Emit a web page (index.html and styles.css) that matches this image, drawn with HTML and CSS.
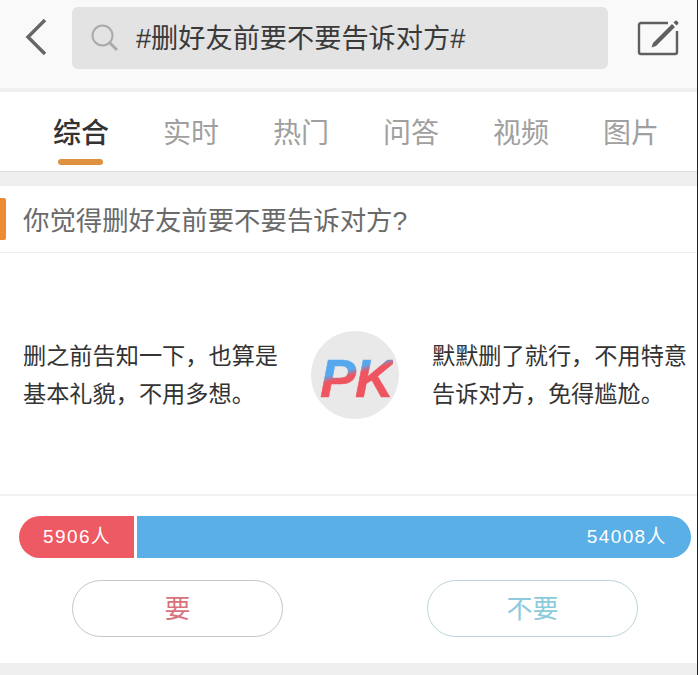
FILE: index.html
```html
<!DOCTYPE html>
<html lang="zh-CN">
<head>
    <meta charset="UTF-8">
    <meta name="viewport" content="width=device-width, initial-scale=1.0">
    <title>删好友前要不要告诉对方</title>
    <link rel="stylesheet" href="styles.css">
</head>
<body>

    <header class="topbar">
        <svg class="back-icon" width="24" height="40" viewBox="0 0 24 40">
            <path d="M21 2 L4 19 L21 36" fill="none" stroke="#666" stroke-width="3.4"/>
        </svg>
        <div class="search">
            <svg class="search-icon" width="30" height="30" viewBox="0 0 30 30">
                <circle cx="12.500" cy="12.500" r="10" fill="none" stroke="#aaa" stroke-width="2"/>
                <path d="M20 20 L27 27" fill="none" stroke="#aaa" stroke-width="3"/>
            </svg>
            <span class="search-text">#删好友前要不要告诉对方#</span>
        </div>
        <svg class="edit-icon" width="44" height="40" viewBox="0 0 44 40">
            <path d="M31 5 H4 Q2 5 2 7 V34 Q2 36 4 36 H38 Q40 36 40 34 V13" fill="none" stroke="#5f5f5f" stroke-width="2.400"/>
            <path d="M16 25 L35 6 L38 9 L19 28 L14.500 29.500 Z" fill="#5f5f5f"/>
            <path d="M36.500 4.500 L38 3 Q39 2 40 3 L41 4 Q42 5 41 6 L39.500 7.500 Z" fill="#5f5f5f"/>
        </svg>
    </header>

    <nav class="tabs">
        <a class="tab active">综合</a>
        <a class="tab">实时</a>
        <a class="tab">热门</a>
        <a class="tab">问答</a>
        <a class="tab">视频</a>
        <a class="tab">图片</a>
    </nav>

    <section class="card">
        <h3 class="question">你觉得删好友前要不要告诉对方?</h3>

        <div class="versus">
            <p class="side">删之前告知一下，也算是<br>基本礼貌，不用多想。</p>
            <div class="pk-badge"><span class="pk-text">PK</span></div>
            <p class="side">默默删了就行，不用特意<br>告诉对方，免得尴尬。</p>
        </div>

        <div class="vote">
            <div class="bar">
                <div class="bar-red">5906人</div>
                <div class="bar-blue">54008人</div>
            </div>
            <div class="buttons">
                <button class="vote-btn yes">要</button>
                <button class="vote-btn no">不要</button>
            </div>
        </div>
    </section>

</body>
</html>
```

FILE: styles.css
```css
* {
    box-sizing: border-box;
}

body {
    position: relative;
    margin: 0;
    height: 675px;
    overflow: hidden;
    background-color: #efefef;
    font-family: "Liberation Sans", "Noto Sans CJK SC", sans-serif;
    color: #333;
}

/* dark edge of the photographed phone screen */
body::after {
    content: "";
    position: absolute;
    top: 0;
    right: 0;
    width: 2px;
    height: 100%;
    background-color: #fff;
    border-left: 1px solid #222;
}

.topbar {
    display: flex;
    align-items: center;
    height: 88px;
    padding: 0 18px 12px 24px;
    background-color: #f9f9f9;
}

.back-icon {
    flex: none;
}

.search {
    display: flex;
    align-items: center;
    width: 536px;
    height: 62px;
    margin-left: 24px;
    padding-left: 18px;
    background-color: #e3e3e3;
    border-radius: 6px;
}

.search-text {
    margin: -4px 0 0 16px;
    font-size: 27.200px;
    color: #3a3a3a;
}

.edit-icon {
    flex: none;
    margin-left: 29px;
}

.tabs {
    display: flex;
    height: 80px;
    margin-top: 4px;
    padding-left: 53px;
    gap: 54px;
    background-color: #fff;
    border-bottom: 1px solid #ddd;
}

.tab {
    position: relative;
    width: 56px;
    padding-top: 22px;
    font-size: 28px;
    line-height: 40px;
    white-space: nowrap;
    color: #a0a0a0;
}

.tab.active {
    color: #333;
    font-weight: 500;
}

.tab.active::after {
    content: "";
    position: absolute;
    left: 5px;
    bottom: 6px;
    width: 45px;
    height: 6px;
    border-radius: 3px;
    background-color: #de9140;
}

.card {
    margin-top: 14px;
    height: 477px;
    background-color: #fff;
}

.question {
    position: relative;
    height: 67px;
    margin: 0;
    padding-left: 23px;
    font-size: 26.400px;
    font-weight: normal;
    line-height: 70px;
    color: #6a6a6a;
    border-bottom: 1px solid #eee;
}

.question::before {
    content: "";
    position: absolute;
    left: 0;
    top: 12px;
    width: 6px;
    height: 42px;
    border-radius: 0 2px 2px 0;
    background-color: #ec8a35;
}

.versus {
    display: flex;
    align-items: center;
    height: 243px;
    padding: 3px 0 0 23px;
    border-bottom: 2px solid #f1f1f1;
}

.side {
    width: 258px;
    margin: 0;
    font-size: 23.200px;
    line-height: 38px;
    white-space: nowrap;
    color: #333;
}

.pk-badge {
    flex: none;
    display: flex;
    align-items: center;
    justify-content: center;
    width: 88px;
    height: 88px;
    margin: -1px 33px 0 30px;
    padding: 6px 0 0 3px;
    border-radius: 50%;
    background-color: #e9e9e9;
}

.pk-text {
    font-size: 54px;
    line-height: 60px;
    font-weight: bold;
    font-style: italic;
    letter-spacing: -1px;
    font-family: "Liberation Sans", sans-serif;
    background: linear-gradient(164deg, #56a8ec 37%, #ee5560 45%);
    -webkit-background-clip: text;
    background-clip: text;
    color: transparent;
    -webkit-text-stroke: 0.6px transparent;
}

.vote {
    padding: 20px 9px 0 19px;
}

.bar {
    display: flex;
    height: 42px;
    gap: 3px;
    font-size: 19px;
    letter-spacing: 1.400px;
    line-height: 42px;
    color: #fff;
}

.bar-red {
    width: 115px;
    padding-left: 24px;
    border-radius: 21px 0 0 21px;
    background-color: #ee5a63;
}

.bar-blue {
    flex: 1;
    padding-right: 24px;
    text-align: right;
    border-radius: 0 21px 21px 0;
    background-color: #59afe6;
}

.buttons {
    display: flex;
    gap: 144px;
    margin-top: 22px;
    padding-left: 53px;
}

.vote-btn {
    width: 211px;
    height: 57px;
    padding: 0 0 4px;
    font-family: inherit;
    font-size: 26px;
    background-color: #fff;
    border: 1px solid #c8c4cc;
    border-radius: 29px;
}

.vote-btn.yes {
    color: #d9727c;
}

.vote-btn.no {
    color: #8bcbdc;
    border-color: #bcd5dc;
}
```
